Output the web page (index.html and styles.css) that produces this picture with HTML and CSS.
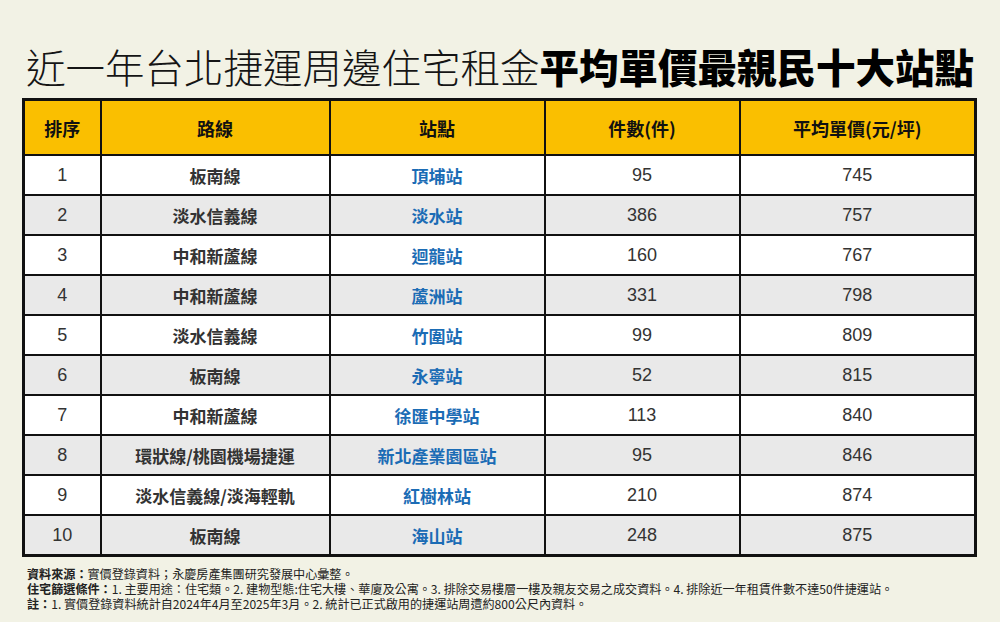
FILE: index.html
```html
<!DOCTYPE html>
<html lang="zh-Hant">
<head>
<meta charset="utf-8">
<link rel="stylesheet" href="styles.css">
</head>
<body>
<div class="page">
  <h1 class="title"><span class="light">近一年台北捷運周邊住宅租金</span><span class="heavy">平均單價最親民十大站點</span></h1>
  <table class="rank">
    <colgroup>
      <col class="c1"><col class="c2"><col class="c3"><col class="c4"><col class="c5">
    </colgroup>
    <thead>
      <tr><th>排序</th><th>路線</th><th>站點</th><th>件數(件)</th><th>平均單價(元/坪)</th></tr>
    </thead>
    <tbody>
      <tr><td class="num">1</td><td class="line">板南線</td><td class="st">頂埔站</td><td class="num">95</td><td class="num">745</td></tr>
      <tr><td class="num">2</td><td class="line">淡水信義線</td><td class="st">淡水站</td><td class="num">386</td><td class="num">757</td></tr>
      <tr><td class="num">3</td><td class="line">中和新蘆線</td><td class="st">迴龍站</td><td class="num">160</td><td class="num">767</td></tr>
      <tr><td class="num">4</td><td class="line">中和新蘆線</td><td class="st">蘆洲站</td><td class="num">331</td><td class="num">798</td></tr>
      <tr><td class="num">5</td><td class="line">淡水信義線</td><td class="st">竹圍站</td><td class="num">99</td><td class="num">809</td></tr>
      <tr><td class="num">6</td><td class="line">板南線</td><td class="st">永寧站</td><td class="num">52</td><td class="num">815</td></tr>
      <tr><td class="num">7</td><td class="line">中和新蘆線</td><td class="st">徐匯中學站</td><td class="num">113</td><td class="num">840</td></tr>
      <tr><td class="num">8</td><td class="line">環狀線/桃園機場捷運</td><td class="st">新北產業園區站</td><td class="num">95</td><td class="num">846</td></tr>
      <tr><td class="num">9</td><td class="line">淡水信義線/淡海輕軌</td><td class="st">紅樹林站</td><td class="num">210</td><td class="num">874</td></tr>
      <tr><td class="num">10</td><td class="line">板南線</td><td class="st">海山站</td><td class="num">248</td><td class="num">875</td></tr>
    </tbody>
  </table>
  <div class="notes">
    <p><b>資料來源：</b>實價登錄資料；永慶房產集團研究發展中心彙整。</p>
    <p><b>住宅篩選條件：</b>1. 主要用途：住宅類。2. 建物型態:住宅大樓、華廈及公寓。3. 排除交易樓層一樓及親友交易之成交資料。4. 排除近一年租賃件數不達50件捷運站。</p>
    <p><b>註：</b>1. 實價登錄資料統計自2024年4月至2025年3月。2. 統計已正式啟用的捷運站周遭約800公尺內資料。</p>
  </div>
</div>
</body>
</html>
```

FILE: styles.css
```css
html, body {
  margin: 0;
  padding: 0;
  background: #f2f2e5;
}
.page {
  width: 1000px;
  height: 622px;
  box-sizing: border-box;
  padding-top: 46px;
  font-family: "Noto Sans CJK TC", "Noto Sans CJK SC", sans-serif;
  color: #1a1a1a;
  overflow: hidden;
}
.title {
  margin: 0;
  font-size: 39.5px;
  line-height: 40px;
  height: 40px;
  text-align: center;
  white-space: nowrap;
  color: #151515;
}
.title .light {
  font-weight: 300;
}
.title .heavy {
  font-weight: 900;
  color: #000;
}
.rank {
  margin: 12px 0 0 22px;
  width: 955px;
  table-layout: fixed;
  border-collapse: collapse;
  border: 3px solid #111;
}
.c1 { width: 77px; }
.c2 { width: 229px; }
.c3 { width: 215px; }
.c4 { width: 195px; }
.c5 { width: 236px; }
.rank th, .rank td {
  border: 2px solid #111;
  padding: 0;
  text-align: center;
  vertical-align: middle;
}
.rank th {
  background: #fabf00;
  height: 53px;
  font-size: 18px;
  font-weight: 700;
  color: #111;
}
.rank td {
  height: 38px;
  background: #fff;
}
.rank tbody tr:nth-child(even) td {
  background: #e9e9e9;
}
.rank td.num {
  font-family: "Liberation Sans", "Noto Sans CJK TC", sans-serif;
  font-size: 18px;
  color: #333;
}
.rank td.line {
  font-size: 17px;
  font-weight: 700;
  color: #333;
}
.rank td.st {
  font-size: 17px;
  font-weight: 700;
  color: #1b6cb5;
}
.notes {
  margin: 9px 0 0 27px;
  font-size: 12.1px;
  line-height: 15px;
  color: #222;
}
.notes p {
  margin: 0;
  white-space: nowrap;
}
.notes b {
  font-weight: 700;
}
```
